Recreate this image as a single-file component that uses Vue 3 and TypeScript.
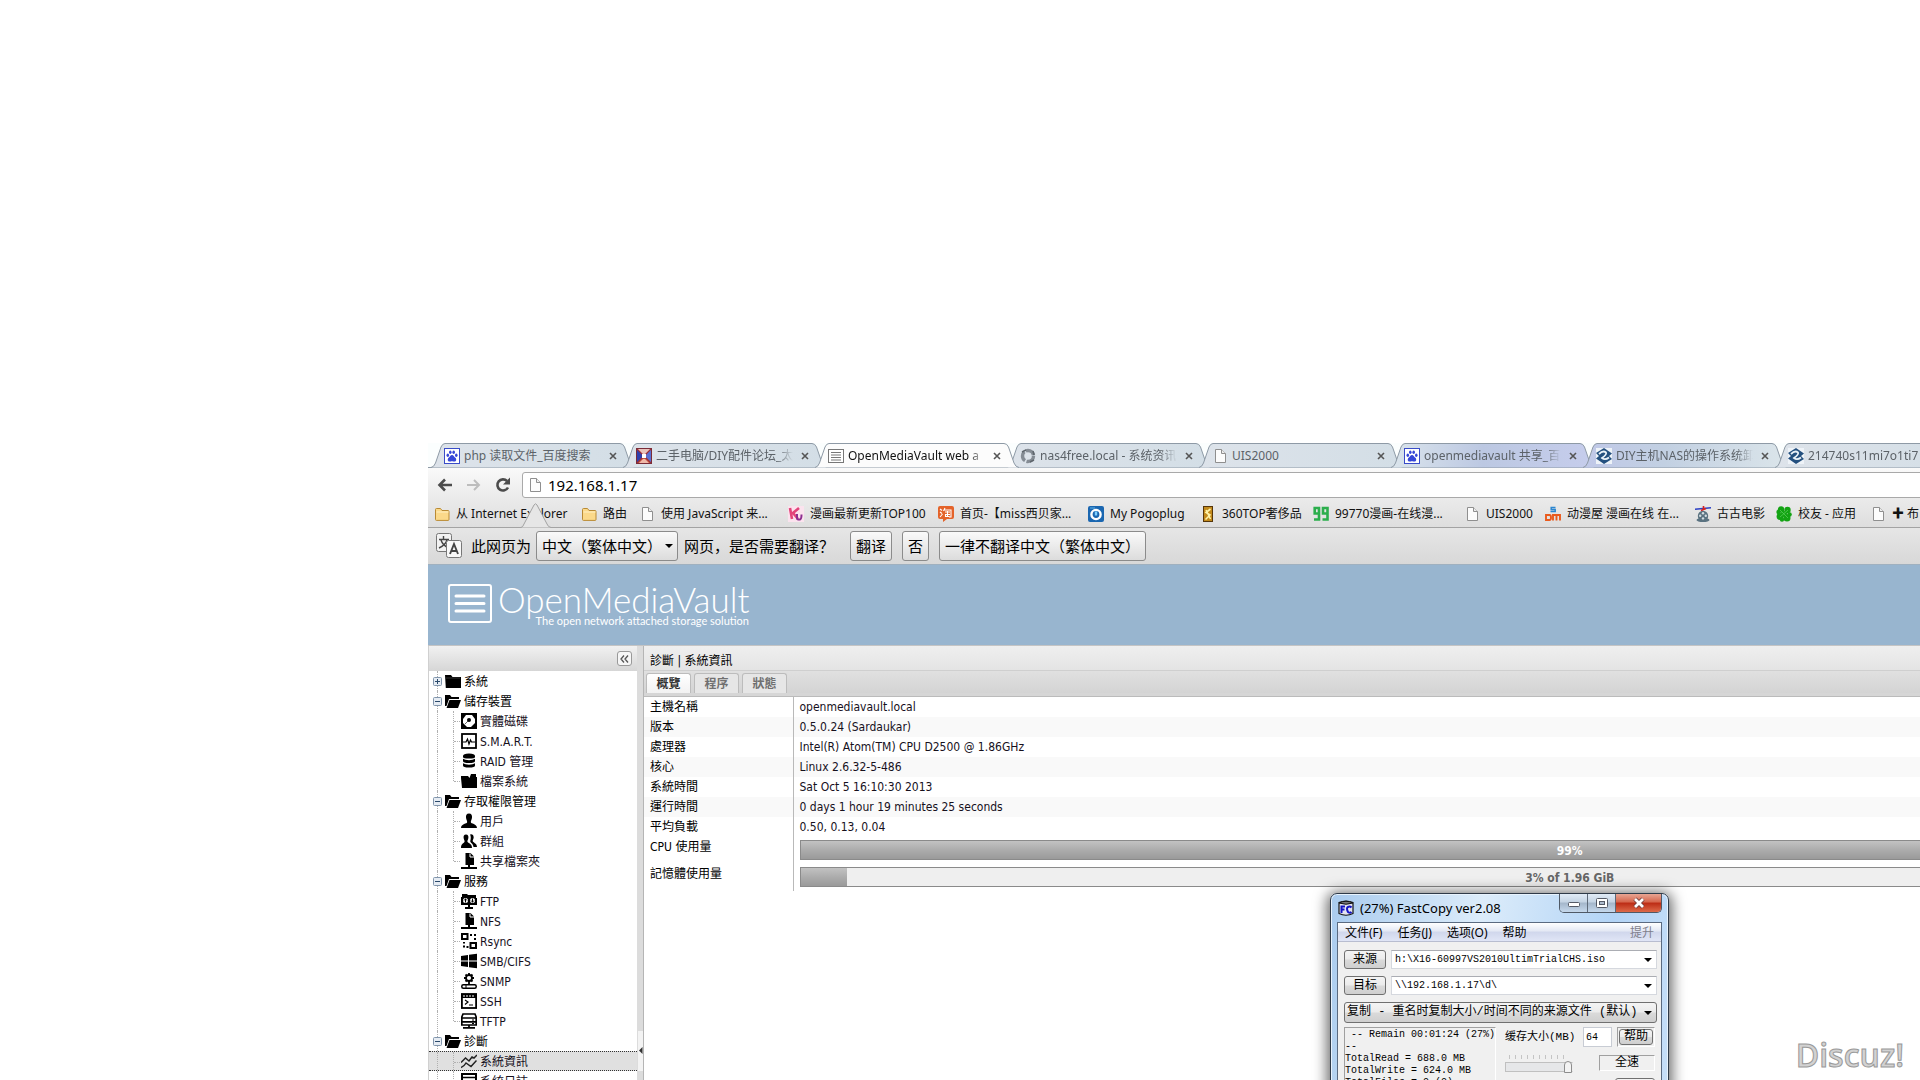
<script setup lang="ts">
import { ref } from 'vue'

interface Tab { title: string; icon: string; active?: boolean; tint?: string }
interface Bookmark { title: string; icon: string; width: number }
interface TreeNode { label: string; icon: string; root?: boolean; open?: boolean; last?: boolean; selected?: boolean }
interface InfoRow { label: string; value?: string; percent?: number; text?: string }

const paw = '<rect x="0.5" y="0.5" width="15" height="15" fill="#fff" stroke="#3a4cc8"/><g fill="#3647d8"><ellipse cx="3.8" cy="7.2" rx="1.3" ry="1.8"/><ellipse cx="6.3" cy="4.3" rx="1.3" ry="1.8"/><ellipse cx="9.7" cy="4.3" rx="1.3" ry="1.8"/><ellipse cx="12.3" cy="7.2" rx="1.3" ry="1.8"/><path d="M8 7c1.6 0 2 1.7 3.4 2.8 1.500 1.300.9 3.800-1 3.800-1 0-1.400-.4-2.400-.4s-1.400.4-2.400.4c-1.900 0-2.500-2.500-1-3.800C6 8.700 6.400 7 8 7z"/></g>'
const page = '<path d="M3.500 1.500h6l4 4v9h-10z" fill="#fcfcfc" stroke="#8f8f8f"/><path d="M9.500 1.500v4h4" fill="#eee" stroke="#8f8f8f"/>'
const folder = '<path d="M1.500 13.500v-10q0-1 1-1h4l1.500 2h6q1 0 1 1v8q0 .9-1 .9h-11.500q-1 0-1-.9z" fill="#fbd98a" stroke="#b98a34"/><path d="M2.500 6h12" stroke="#fff0c4"/>'
const zol = '<rect width="16" height="16" fill="#eef3f8"/><path d="M8 0l8 5.500-3 2.500 3 3L8 16 0 10.500 3 8 0 5z" fill="#24507f"/><path d="M3 6q4-4 7-1.500 1 2-4 5.500 3 2.500 7-.5" stroke="#e9f1f8" stroke-width="1.800" fill="none"/>'
const closedFolder = '<path d="M0 2h6l1.500 2H16v11H.8z" fill="#000"/><path d="M1 5h14" stroke="#555" stroke-width=".6"/>'
const nfs = '<path d="M4.500 0h5L13 3.500V12H4.500z" fill="#000"/><path d="M9 .5V4h4" stroke="#fff" fill="none"/><path d="M7 12h2v2H7zM0 14h16v2H0z" fill="#000"/>'

const icons: Record<string, string> = {
  paw, page, folder, zol, closedFolder, nfs,
  forum: '<rect width="16" height="16" fill="#3d50c0"/><path d="M1 1l5 5v4l-5 5z" fill="#2f3fae"/><path d="M15 1l-5 5v4l5 5z" fill="#5a70d4"/><path d="M1 1h14l-5 5H6z" fill="#e9c3bd"/><path d="M1 15h14l-5-5H6z" fill="#c2543f"/><path d="M3 15h10l-4-4H7z" fill="#f0b8a8"/><path d="M1 1l14 14M15 1L1 15" stroke="#a03038" stroke-width="1.200"/><rect x="6" y="6" width="4" height="4" fill="#fff"/><rect x=".5" y=".5" width="15" height="15" fill="none" stroke="#7a2c38"/>',
  omv: '<rect x=".5" y="1.500" width="15" height="13" fill="#fff" stroke="#777"/><path d="M3 4.500h10M3 7h10M3 9.500h10M3 12h10" stroke="#777"/>',
  nas: '<circle cx="8" cy="8" r="5.500" fill="none" stroke="#858c94" stroke-width="3.400" stroke-dasharray="10 1.500"/><path d="M2 4l4-2M14 12l-4 2M13 3l1 4" stroke="#5f666d" stroke-width="1.500"/>',
  ku: '<rect width="16" height="16" fill="#fbe3ee"/><path d="M2 2l2 11M11 2L5 7l5 6" stroke="#e2447a" stroke-width="2.600" fill="none"/><path d="M9 8v4q0 2 3 1.500 1.500-.5 1.500-5" stroke="#8d2f90" stroke-width="2" fill="none"/>',
  tao: '<path d="M2 0h12q2 0 2 2v9q0 2-2 2H9l-4 3v-3H2q-2 0-2-2V2q0-2 2-2z" fill="#e4632a"/><path d="M2 3l2 1.500M2 6l2 1.500M2 11l2.500-3M7 2L5.500 5M6.500 4H13v7h-2M7 6h5M7 8.500h5M9.500 5v5M7.500 8v2.500h4" stroke="#fff" fill="none" stroke-width="1.100"/>',
  pogo: '<rect width="16" height="16" rx="2" fill="#1a66b0"/><circle cx="8" cy="8.500" r="4.600" fill="none" stroke="#fff" stroke-width="2.400"/><path d="M8 5.500v4" stroke="#7fd0ff" stroke-width="2.400"/><path d="M2 2h5" stroke="#5fb4ec"/>',
  lux: '<rect x="3" y="0" width="10" height="16" fill="#c28a1c"/><rect x="3.500" y=".5" width="9" height="15" fill="none" stroke="#56360a"/><path d="M10.500 3L6 6.500l4 2.500-4.500 4.500M6 4l4.500 9" stroke="#fff3a8" stroke-width="1.600" fill="none"/>',
  nine: '<g fill="none" stroke="#2bae4c" stroke-width="2.600"><path d="M6 7.500H1.700V2H6v11.500H1M14.500 7.500H10V2h4.500v11.500H9.500"/></g>',
  sdm: '<path d="M10.500 1.500H6.200v2h4v2H5.500" stroke="#2b86d0" stroke-width="1.500" fill="none"/><path d="M1 9v5h3.500q1.500 0 1.500-2.500T4.500 9zM8 14.500V9h7v5.500M11.500 9v5.500" stroke="#ea5a1c" stroke-width="1.900" fill="none"/>',
  film: '<circle cx="8" cy="10" r="5.200" fill="#5a7280"/><ellipse cx="8" cy="14" rx="6.500" ry="2" fill="#5a7280"/><g fill="#d4dde2"><circle cx="8" cy="7.200" r="1.200"/><circle cx="5.200" cy="9.800" r="1.200"/><circle cx="10.800" cy="9.800" r="1.200"/><circle cx="8" cy="12.400" r="1.200"/></g><path d="M0 3.200l16-1.400" stroke="#2b3fc4" stroke-width="1.400"/><path d="M8.500 0v5M6 4.500l5-2" stroke="#d42222" stroke-width="1.600" fill="none"/>',
  clover: '<g fill="#13a313"><circle cx="5" cy="3.500" r="3.200"/><circle cx="11.500" cy="4" r="3.200"/><circle cx="4" cy="10.500" r="3.400"/><circle cx="11" cy="12" r="3.500"/><circle cx="8" cy="8" r="3"/><circle cx="13.500" cy="8.500" r="2.300"/><circle cx="6" cy="13.500" r="2.200"/><circle cx="2.500" cy="6" r="2.200"/></g><path d="M4 4l8 8M12 4l-8 7" stroke="#5fd45f" stroke-width=".7"/>',
  openFolder: '<path d="M0 2h5l1.500 2H14v2H4L1.500 13H0z" fill="#000"/><path d="M4.500 7H16l-3 8H1.500z" fill="#000"/>',
  disk: '<rect x="1" y="1" width="14" height="14" fill="#fff" stroke="#000" stroke-width="2"/><path d="M2 2h3L2 6zM14 2h-3l3 4zM2 14h4l-4-4zM14 14h-4l4-4z"/><circle cx="8" cy="7" r="2"/><path d="M4 11l3-3" stroke="#000" stroke-width=".6"/>',
  smart: '<rect x="1" y="1" width="14" height="14" fill="#fff" stroke="#000" stroke-width="1.800"/><path d="M2 9h3l1.500-3L8 11l1.500-4 1 2H14" stroke="#000" stroke-width="1.200" fill="none"/>',
  raid: '<g fill="#000"><path d="M2 3q0-2.500 6-2.500T14 3v1q0 1.500-6 1.500T2 4z"/><path d="M2 5.800q2 1.400 6 1.400t6-1.400V8q0 2-6 2T2 8z"/><path d="M2 10.300q2 1.400 6 1.400t6-1.400v2.200q0 2-6 2t-6-2z"/></g>',
  fs: '<path d="M0 3h7l1.500 2L10 1h5v3h1v11H1L0 5z" fill="#000"/>',
  user: '<path d="M8 .5c2.500 0 3.200 1.800 3 4-.1 2-1.200 3-1.200 4.500 0 2 6.200 1.500 6.200 6H0c0-4.500 6.200-4 6.200-6C6.200 7.500 5.100 6.500 5 4.500c-.2-2.200.5-4 3-4z"/>',
  group: '<path d="M5 1.500c2 0 2.600 1.500 2.400 3.300-.1 1.600-1 2.400-1 3.700 0 1.700 4.600 1.500 4.600 6.500H0c0-5 3.600-4.800 3.600-6.500 0-1.300-.9-2.100-1-3.700C2.400 3 3 1.500 5 1.500z"/><path d="M9 1.500q3.500-1 3.700 2.500c0 2-1 2.700-1 4 0 1.700 4.300 2 4.300 6h-3.500c-.3-3.500-3-4-3.200-5.500 0-1.300 1.300-4-.3-7z"/>',
  ftp: '<path d="M1 1h5l1 1h8v3h1v7H9v2h3v2H4v-2h3v-2H0V4h1z"/><circle cx="4.500" cy="7.500" r="2.500" fill="#fff"/><circle cx="11.500" cy="7.500" r="2.500" fill="#fff"/><path d="M4.500 5.500v4M11.500 5.500v4M3 7.500l1.500-1.500L6 7.500M10 7.500L11.500 9 13 7.500" stroke="#000" fill="none"/>',
  rsync: '<g fill="none" stroke="#000" stroke-width="2"><rect x="1" y="1" width="5.500" height="5"/><rect x="9.500" y="10" width="5.500" height="5"/></g><path d="M9 1h2v2H9zM13 1h2v2h-2zM13 5h2v2h-2zM2 9h2v1.500H2zM2 12.500h2v2H2zM5.500 13h2v2h-2z"/>',
  win: '<path d="M0 3l7-1v5.500H0zM8 1.800L16 .7v6.800H8zM0 8.500h7V14l-7-1zM8 8.500h8v6.800l-8-1.100z"/>',
  snmp: '<circle cx="8" cy="5" r="3" fill="none" stroke="#000" stroke-width="1.800"/><path d="M8 0v2M8 8v3M3 5h2M11 5h2M4.500 1.500l1.500 1.500M11.500 1.500L10 3M4.500 8.500L6 7M11.500 8.500L10 7" stroke="#000" stroke-width="1.800"/><rect x=".8" y="11.800" width="14.400" height="3.400" rx="1.500" fill="#fff" stroke="#000" stroke-width="1.500"/><path d="M5 11v5" stroke="#000"/>',
  ssh: '<rect x=".9" y="1" width="14.200" height="14" fill="#fff" stroke="#000" stroke-width="1.800"/><path d="M1 1h14v4H1z"/><path d="M3 2v2M6 2v2M9 2v2M12 2v2" stroke="#fff"/><path d="M4 7l3 2-3 2.500M8 12h4" stroke="#000" stroke-width="1.200" fill="none"/>',
  tftp: '<path d="M2 1h12l1.200 3v8H.8V4z" fill="#fff" stroke="#000" stroke-width="1.700"/><path d="M1 5h14M1 8.800h14M8 12v3M2 14.800h12" stroke="#000" stroke-width="1.700"/><path d="M11 7h2M11 10.500h2" stroke="#000"/>',
  chart: '<path d="M0 9.500L4.500 5l3.500 3L11 4l2 1 3-3M0 14.500q3-1 5-4.500l5 3.500 5.500-6" stroke="#222" stroke-width="1.500" fill="none"/>',
  log: '<rect x="1" y="1" width="14" height="14" fill="#fff" stroke="#000" stroke-width="2"/><path d="M1 4.500h14M1 8h14M1 11.500h14" stroke="#000" stroke-width="1.600"/>',
}

const tabs: Tab[] = [
  { title: 'php 读取文件_百度搜索', icon: 'paw' },
  { title: '二手电脑/DIY配件论坛_太', icon: 'forum' },
  { title: 'OpenMediaVault web a', icon: 'omv', active: true },
  { title: 'nas4free.local - 系统资讯', icon: 'nas' },
  { title: 'UIS2000', icon: 'page' },
  { title: 'openmediavault 共享_百', icon: 'paw', tint: 'url(#tintB)' },
  { title: 'DIY主机NAS的操作系统卸', icon: 'zol', tint: 'url(#tintC)' },
  { title: '214740s11mi7o1ti7', icon: 'zol' },
]

const bookmarks: Bookmark[] = [
  { title: '从 Internet Explorer', icon: 'folder', width: 147 },
  { title: '路由', icon: 'folder', width: 58 },
  { title: '使用 JavaScript 来...', icon: 'page', width: 149 },
  { title: '漫画最新更新TOP100', icon: 'ku', width: 150 },
  { title: '首页-【miss西贝家...', icon: 'tao', width: 150 },
  { title: 'My Pogoplug', icon: 'pogo', width: 112 },
  { title: '360TOP奢侈品', icon: 'lux', width: 113 },
  { title: '99770漫画-在线漫...', icon: 'nine', width: 151 },
  { title: 'UIS2000', icon: 'page', width: 81 },
  { title: '动漫屋 漫画在线 在...', icon: 'sdm', width: 150 },
  { title: '古古电影', icon: 'film', width: 81 },
  { title: '校友 - 应用', icon: 'clover', width: 94 },
  { title: '✚ 布', icon: 'page', width: 94 },
]

const tree: TreeNode[] = [
  { label: '系統', icon: 'closedFolder', root: true },
  { label: '儲存裝置', icon: 'openFolder', root: true, open: true },
  { label: '實體磁碟', icon: 'disk' },
  { label: 'S.M.A.R.T.', icon: 'smart' },
  { label: 'RAID 管理', icon: 'raid' },
  { label: '檔案系統', icon: 'fs', last: true },
  { label: '存取權限管理', icon: 'openFolder', root: true, open: true },
  { label: '用戶', icon: 'user' },
  { label: '群組', icon: 'group' },
  { label: '共享檔案夾', icon: 'nfs', last: true },
  { label: '服務', icon: 'openFolder', root: true, open: true },
  { label: 'FTP', icon: 'ftp' },
  { label: 'NFS', icon: 'nfs' },
  { label: 'Rsync', icon: 'rsync' },
  { label: 'SMB/CIFS', icon: 'win' },
  { label: 'SNMP', icon: 'snmp' },
  { label: 'SSH', icon: 'ssh' },
  { label: 'TFTP', icon: 'tftp', last: true },
  { label: '診斷', icon: 'openFolder', root: true, open: true },
  { label: '系統資訊', icon: 'chart', selected: true },
  { label: '系統日誌', icon: 'log' },
]

const info: InfoRow[] = [
  { label: '主機名稱', value: 'openmediavault.local' },
  { label: '版本', value: '0.5.0.24 (Sardaukar)' },
  { label: '處理器', value: 'Intel(R) Atom(TM) CPU D2500 @ 1.86GHz' },
  { label: '核心', value: 'Linux 2.6.32-5-486' },
  { label: '系統時間', value: 'Sat Oct 5 16:10:30 2013' },
  { label: '運行時間', value: '0 days 1 hour 19 minutes 25 seconds' },
  { label: '平均負載', value: '0.50, 0.13, 0.04' },
  { label: 'CPU 使用量', percent: 99, text: '99%' },
  { label: '記憶體使用量', percent: 3, text: '3% of 1.96 GiB' },
]

const panels = ['概覽', '程序', '狀態']
const activePanel = ref(0)
const address = ref('192.168.1.17')
const bufferSize = ref('64')
const speed = ref(10)
</script>

<template>
  <div class="desktop">
    <div class="browser">
      <svg class="defs" width="0" height="0" aria-hidden="true">
        <defs>
          <linearGradient id="tintA"><stop offset="0" stop-color="#dde3ea" /><stop offset="1" stop-color="#d3dee6" /></linearGradient>
          <linearGradient id="tintB"><stop offset="0" stop-color="#dbe5ec" /><stop offset=".45" stop-color="#bcc8e2" /><stop offset="1" stop-color="#c6cdec" /></linearGradient>
          <linearGradient id="tintC"><stop offset="0" stop-color="#c0c8e8" /><stop offset=".4" stop-color="#c2d0e2" /><stop offset="1" stop-color="#dbe5ea" /></linearGradient>
        </defs>
      </svg>
      <ul class="tabs">
        <li v-for="(t, i) in tabs" :key="i" class="tab" :class="{ active: t.active }">
          <svg class="tab-shape" viewBox="0 0 204 25" aria-hidden="true">
            <path d="M0 24.500Q3 24 4.500 20L10 4Q11.500.5 14 .5H189Q192 .5 193.500 4L199 20Q200.500 24 204 24.500" :fill="t.active ? '#fcfcfc' : t.tint || 'url(#tintA)'" stroke="#8e9aa6" />
          </svg>
          <svg class="ico" viewBox="0 0 16 16" aria-hidden="true" v-html="icons[t.icon]" />
          <span class="tab-title">{{ t.title }}</span>
          <button class="tab-close" type="button" aria-label="关闭">
            <svg viewBox="0 0 8 8" width="8" height="8" aria-hidden="true"><path d="M1 1l6 6M7 1L1 7" stroke="#555" stroke-width="1.600" /></svg>
          </button>
        </li>
      </ul>

      <div class="toolbar">
        <button type="button" class="nav" aria-label="后退"><svg viewBox="0 0 16 16" width="16" height="16"><path d="M15 8H3M8 2.500L2.500 8 8 13.500" stroke="#4c4c4c" stroke-width="2.600" fill="none" /></svg></button>
        <button type="button" class="nav" aria-label="前进"><svg viewBox="0 0 16 16" width="16" height="16"><path d="M1 8h12M8 3l5 5-5 5" stroke="#bdbdbd" stroke-width="2" fill="none" /></svg></button>
        <button type="button" class="nav" aria-label="重新加载"><svg viewBox="0 0 16 16" width="16" height="16"><path d="M13 10.500A5.600 5.600 0 1 1 12 4" stroke="#4c4c4c" stroke-width="2.600" fill="none" /><path d="M15 .5v7H8z" fill="#4c4c4c" /></svg></button>
        <label class="omnibox">
          <svg class="ico" viewBox="0 0 16 16" aria-hidden="true" v-html="icons.page" />
          <input v-model="address" type="text" aria-label="地址栏" />
        </label>
      </div>

      <nav class="bookmarks">
        <a v-for="(b, i) in bookmarks" :key="i" href="#" class="bookmark" :style="{ width: b.width + 'px' }">
          <svg class="ico" viewBox="0 0 16 16" aria-hidden="true" v-html="icons[b.icon]" />
          <span>{{ b.title }}</span>
        </a>
        <svg class="callout" viewBox="0 0 30 25" aria-hidden="true"><path d="M0 24.500Q2 24 3 21L13 2Q14.500-.5 16 2L26 21Q27 24 30 24.500" fill="#e6e6e6" stroke="#a3a3a3" /></svg>
      </nav>

      <div class="translate">
        <svg class="translate-ico" viewBox="0 0 28 26" aria-hidden="true">
          <rect x="1.500" y=".5" width="15" height="18" rx="2" fill="#f2f2f2" stroke="#777" />
          <path d="M8.500 3v3M4 6.500h10M6 7q1.500 5 7.500 8M12 7q-1.500 5-8 8" stroke="#444" stroke-width="1.400" fill="none" />
          <rect x="11.500" y="7.500" width="15" height="17" rx="2" fill="#f8f8f8" stroke="#777" />
          <path d="M15 21l4-10 4 10M16.500 18h5" stroke="#444" stroke-width="1.900" fill="none" />
        </svg>
        <span>此网页为</span>
        <span class="lang-wrap"><select class="chrome-btn lang" aria-label="网页语言"><option>中文（繁体中文）</option></select></span>
        <span class="question">网页，是否需要翻译？</span>
        <button type="button" class="chrome-btn">翻译</button>
        <button type="button" class="chrome-btn">否</button>
        <button type="button" class="chrome-btn">一律不翻译中文（繁体中文）</button>
      </div>

      <header class="banner">
        <svg class="logo" viewBox="0 0 44 39" aria-hidden="true">
          <rect x="1" y="1" width="42" height="37" rx="2" fill="none" stroke="#fff" stroke-width="2" />
          <path d="M8 12h28M8 19.500h28M8 27h28" stroke="#fff" stroke-width="3" stroke-linecap="round" />
        </svg>
        <div class="brand">
          <div class="brand-name">OpenMediaVault</div>
          <div class="brand-tag">The open network attached storage solution</div>
        </div>
      </header>

      <div class="workspace">
        <aside class="sidebar">
          <div class="side-head">
            <button type="button" class="collapse" aria-label="收合"><svg viewBox="0 0 9 8" width="9" height="8"><path d="M4 .5L1 4l3 3.500M8 .5L5 4l3 3.500" stroke="#555" stroke-width="1.300" fill="none" /></svg></button>
          </div>
          <ul class="tree">
            <li v-for="(n, i) in tree" :key="i" class="node" :class="{ child: !n.root, last: n.last, selected: n.selected }">
              <span v-if="n.root" class="expander"><svg viewBox="0 0 9 9" width="9" height="9" aria-hidden="true"><rect x=".5" y=".5" width="8" height="8" rx="1" fill="#e6ecf3" stroke="#8296ad" /><path :d="n.open ? 'M2 4.500h5' : 'M2 4.500h5M4.500 2v5'" stroke="#2b4a6b" /></svg></span>
              <span v-else class="guide" />
              <svg class="ico" viewBox="0 0 16 16" aria-hidden="true" v-html="icons[n.icon]" />
              <span class="node-label">{{ n.label }}</span>
            </li>
          </ul>
        </aside>
        <div class="splitter"><svg class="grip" viewBox="0 0 6 40" aria-hidden="true"><path d="M0 0h5v40H0z" fill="#f3f3f3" /><path d="M4.500 16v7L1 19.500z" fill="#333" /></svg></div>
        <main class="content">
          <h1 class="title">診斷 | 系統資訊</h1>
          <div class="panel-tabs" role="tablist">
            <button v-for="(p, i) in panels" :key="p" type="button" role="tab" class="panel-tab" :class="{ on: i === activePanel }" @click="activePanel = i">{{ p }}</button>
          </div>
          <table class="info">
            <tbody>
              <tr v-for="r in info" :key="r.label" :class="{ tall: r.text }">
                <th scope="row">{{ r.label }}</th>
                <td>
                  <div v-if="r.text" class="meter" role="progressbar" :aria-valuenow="r.percent">
                    <div class="fill" :style="{ width: r.percent + '%' }" />
                    <span class="meter-text" :class="{ light: r.percent === 99 }">{{ r.text }}</span>
                  </div>
                  <template v-else>{{ r.value }}</template>
                </td>
              </tr>
            </tbody>
          </table>
        </main>
      </div>
    </div>

    <section class="fastcopy">
      <div class="fc-title">
        <svg class="fc-ico" viewBox="0 0 16 16" aria-hidden="true"><path d="M1 2.500Q8-.5 15 2.500v11Q8 17 1 13.500z" fill="#e4e4f0" stroke="#111" stroke-width="1.200" /><path d="M1 3Q8-.5 15 3 8 5.500 1 3z" fill="#777" stroke="#111" /><path d="M7 6.500H3.500v6.500M3.500 9.500h3M13.500 7.500Q12 6 10 7t0 5q2 1.500 3.500 0" stroke="#1414c4" stroke-width="2" fill="none" /></svg>
        <span>(27%) FastCopy ver2.08</span>
        <div class="win-btns">
          <button type="button" aria-label="最小化"><svg viewBox="0 0 14 12" width="14" height="12"><rect x="1.500" y="5.500" width="11" height="4" rx="1" fill="#fff" stroke="#555a66" /></svg></button>
          <button type="button" aria-label="最大化"><svg viewBox="0 0 14 12" width="14" height="12"><rect x="1.500" y="1.500" width="11" height="9" rx="1" fill="#fff" stroke="#555a66" /><rect x="4.500" y="4.500" width="5" height="3" fill="#aebccd" stroke="#555a66" /></svg></button>
          <button type="button" class="close" aria-label="关闭"><svg viewBox="0 0 14 12" width="14" height="12"><path d="M3 2l8 8M11 2l-8 8" stroke="#6b3a3a" stroke-width="4.400" /><path d="M3 2l8 8M11 2l-8 8" stroke="#fff" stroke-width="2.800" /></svg></button>
        </div>
      </div>
      <div class="fc-client">
        <div class="fc-menu">
          <button type="button">文件(F)</button><button type="button">任务(J)</button><button type="button">选项(O)</button><button type="button">帮助</button>
          <button type="button" class="elevate">提升</button>
        </div>
        <div class="fc-body">
          <div class="fc-row">
            <button type="button" class="win-btn">来源</button>
            <span class="combo"><select aria-label="来源"><option>h:\X16-60997VS2010UltimTrialCHS.iso</option></select></span>
          </div>
          <div class="fc-row">
            <button type="button" class="win-btn">目标</button>
            <span class="combo"><select aria-label="目标"><option>\\192.168.1.17\d\</option></select></span>
          </div>
          <span class="combo mode"><select aria-label="模式"><option>复制 - 重名时复制大小/时间不同的来源文件 (默认)</option></select></span>
          <div class="fc-lower">
            <pre class="log"> -- Remain 00:01:24 (27%)
--
TotalRead = 688.0 MB
TotalWrite = 624.0 MB
TotalFiles = 0 (0)</pre>
            <div class="fc-side">
              <div class="side-row">
                <label for="buffer">缓存大小(MB)</label>
                <input id="buffer" v-model="bufferSize" type="text" class="buffer" />
                <span class="frame"><button type="button" class="win-btn help">帮助</button></span>
              </div>
              <div class="side-row speed-row">
                <div class="slider"><div class="ticks" /><input v-model="speed" type="range" min="0" max="10" aria-label="速度" /></div>
                <output class="speed">全速</output>
              </div>
              <div class="side-row last-row">
                <label class="check"><input type="checkbox" />估计时间</label>
                <button type="button" class="win-btn run">显示</button>
              </div>
            </div>
          </div>
        </div>
      </div>
    </section>

    <div class="watermark">Discuz!</div>
  </div>
</template>

<style>
body { margin: 0; background: #fff; }
</style>

<style scoped>
.desktop {
  position: relative;
  box-sizing: border-box;
  height: 100vh;
  padding: 443px 0 0 428px;
  overflow: hidden;
  background: #fff;
  font: 12px/16px "Noto Sans", "Noto Sans CJK SC", sans-serif;
  color: #000;
}
.desktop * { box-sizing: border-box; }
button, input, select { font: inherit; color: inherit; margin: 0; }
ul { list-style: none; margin: 0; padding: 0; }
.browser { width: 100vw; height: 100%; display: flex; flex-direction: column; }
.browser > * { flex: none; }
.defs { position: absolute; }
.ico { width: 16px; height: 16px; flex: none; }

/* tab strip */
.tabs { display: flex; height: 25px; padding-left: 3px; border-bottom: 1px solid #8e9aa6; background: #fbfefe; }
.tab { position: relative; flex: 0 0 192px; min-width: 0; height: 25px; display: flex; align-items: center; padding: 0 2px 0 13px; color: #5c6268; }
.tab > * { position: relative; }
.tab .tab-shape { position: absolute; left: 0; top: 0; width: 204px; height: 25px; }
.tab.active { z-index: 2; color: #111; }
.tab-title { flex: 1; min-width: 0; margin: 0 4px; overflow: hidden; white-space: nowrap; mask-image: linear-gradient(90deg, #000 88%, transparent); }
.tab:first-child .tab-title, .tab:nth-child(5) .tab-title { mask-image: none; }
.tab-close { flex: none; width: 16px; height: 16px; padding: 0; border: 0; background: none; display: grid; place-items: center; }

/* toolbar */
.toolbar { display: flex; align-items: center; height: 34px; padding: 0 0 0 5px; gap: 5px; background: linear-gradient(#fafafa, #e9e9e9); }
.nav { width: 24px; height: 24px; padding: 0; border: 0; background: none; display: grid; place-items: center; }
.omnibox { flex: 1; display: flex; align-items: center; height: 26px; margin-left: 2px; padding-left: 4px; border: 1px solid #a9a9a9; border-radius: 3px 0 0 3px; background: #fff; }
.omnibox input { flex: 1; border: 0; outline: 0; padding: 0 0 0 5px; font-size: 15px; line-height: 20px; background: none; }

/* bookmarks */
.bookmarks { position: relative; display: flex; align-items: center; height: 26px; padding: 0 0 2px 6px; border-bottom: 1px solid #a3a3a3; background: linear-gradient(#e9e9e9, #dedede); }
.bookmark { flex: none; display: flex; align-items: center; gap: 6px; color: #111; text-decoration: none; white-space: nowrap; }
.callout { position: absolute; left: 93px; top: 1px; width: 30px; height: 25px; }

/* translate bar */
.translate { display: flex; align-items: center; height: 37px; padding-left: 7px; border-bottom: 1px solid #9fb0bf; font-size: 15px; line-height: 20px; background: linear-gradient(#e6e6e6, #d8d8d8); }
.translate-ico { width: 28px; height: 26px; margin-right: 8px; }
.chrome-btn { height: 30px; padding: 0 5px; border: 1px solid #8b8b8b; border-radius: 3px; background: linear-gradient(#fafafa, #dcdcdc); white-space: nowrap; }
.translate button { margin-right: 10px; }
.lang-wrap { position: relative; margin: 0 6px 0 5px; }
.lang { appearance: none; width: 142px; }
.lang-wrap::after, .combo::after { content: ""; position: absolute; right: 5px; top: 50%; margin-top: -2px; border: 4px solid transparent; border-top-color: #000; border-bottom: 0; pointer-events: none; }
.question { margin-right: 16px; }

/* banner */
.banner { display: flex; align-items: center; height: 80px; padding: 0 0 4px 20px; background: #98b5cf; color: #fff; }
.logo { width: 44px; height: 39px; margin-right: 6px; }
.brand { width: 251px; padding-top: 4px; }
.brand-name { font: 300 35px/32px Lato, "Open Sans", sans-serif; }
.brand-tag { font: 400 11px/12px Lato, "Open Sans", sans-serif; text-align: right; white-space: nowrap; }

/* workspace */
.workspace { display: flex; flex: 1 0 0; min-height: 0; font: 11px/20px "DejaVu Sans Condensed", "Noto Sans CJK TC", sans-serif; border-top: 1px solid #c4c4c4; }
.sidebar { width: 209px; flex: none; border-left: 1px solid #d0d0d0; background: #fff; }
.side-head { display: flex; justify-content: flex-end; align-items: center; height: 25px; padding-right: 5px; background: linear-gradient(#f1f1f1, #d6d6d6); }
.collapse { width: 15px; height: 15px; padding: 0; display: grid; place-items: center; border: 1px solid #999; border-radius: 3px; background: #f6f6f6; }
.tree { font-size: 12px; }
.node { position: relative; display: flex; align-items: center; height: 20px; padding-left: 4px; }
.node::before { content: ""; position: absolute; left: 8px; top: 0; bottom: 0; border-left: 1px dotted #b0b0b0; }
.expander { position: relative; width: 12px; height: 9px; display: flex; }
.guide { width: 28px; height: 20px; }
.guide::before { content: ""; position: absolute; left: 24px; top: 0; height: 20px; border-left: 1px dotted #b0b0b0; }
.guide::after { content: ""; position: absolute; left: 25px; top: 10px; width: 6px; border-top: 1px dotted #b0b0b0; }
.last .guide::before { height: 10px; }
.node-label { margin-left: 3px; padding-top: 1px; white-space: nowrap; }
.child .node-label { color: #16101c; }
.selected { background: #e0e0e0; border-top: 1px dotted #333; border-bottom: 1px dotted #333; }
.splitter { position: relative; width: 6px; flex: none; background: #dcdcdc; }
.grip { position: absolute; left: 1px; top: 385px; width: 6px; height: 40px; }
.content { flex: 1; min-width: 0; border-left: 1px solid #b5b5b5; background: #fff; }
.title { margin: 0; padding: 3px 0 0 6px; height: 25px; font-size: 12px; font-weight: 400; line-height: 24px; background: linear-gradient(#efefef, #e4e4e4); border-bottom: 1px solid #cfcfcf; }
.panel-tabs { display: flex; gap: 3px; height: 26px; padding: 2px 0 0 2px; align-items: flex-start; background: linear-gradient(#d6d6d6 0 0) 0 22px / 100% 4px no-repeat, linear-gradient(#e0e0e0, #d2d2d2); border-bottom: 1px solid #bbb; }
.panel-tab { width: 45px; height: 20px; padding: 0; border: 1px solid #bcbcbc; border-bottom: 0; border-radius: 3px 3px 0 0; background: #e6e6e6; color: #707070; font-size: 12px; font-weight: 700; line-height: 18px; }
.panel-tab.on { background: linear-gradient(#fff, #f2f2f2); color: #333; }
.info { width: 100%; border-collapse: collapse; table-layout: fixed; }
.info tr { height: 20px; }
.info tr:nth-child(even) { background: #f9f9f9; }
.info tr.tall { height: 27px; background: none; }
.info th { width: 149px; padding: 0 0 0 6px; border-right: 1px solid #b9b9b9; text-align: left; font-weight: 400; font-size: 12px; vertical-align: top; }
.info td { padding: 0 8px 0 6px; vertical-align: top; color: #16101c; font-size: 12px; }
.meter { position: relative; height: 20px; margin-top: 3px; border: 1px solid #8a8a8a; background: #efefef; }
.fill { height: 18px; background: linear-gradient(#c2c2c2, #acacac 50%, #9a9a9a); }
.meter-text { position: absolute; inset: 0; text-align: center; line-height: 20px; font-weight: 700; color: #666; }
.meter-text.light { color: #fff; }

/* FastCopy window */
.fastcopy {
  position: absolute; left: 1330px; top: 893px; width: 339px; height: 260px;
  padding: 1px 6px; border: 1px solid #2f3a48; border-radius: 7px 7px 0 0;
  background: linear-gradient(100deg, #a9cbee, #dcecfa 40%, #b3d4f6 75%, #c9e0f8);
  box-shadow: inset 0 0 0 1px #e8f3fd, 0 2px 14px 3px rgba(0, 0, 0, .6);
}
.fc-title { display: flex; align-items: center; height: 27px; padding-bottom: 2px; font-size: 13px; line-height: 20px; }
.fc-ico { width: 16px; height: 16px; margin: 0 6px 0 1px; }
.win-btns { display: flex; align-self: flex-start; margin-left: auto; margin-top: -1px; border: 1px solid #4f5966; border-top: 0; border-radius: 0 0 5px 5px; overflow: hidden; }
.win-btns button { width: 28px; height: 18px; padding: 0; border: 0; border-right: 1px solid #5d6978; display: grid; place-items: center; background: linear-gradient(#e1ebf6, #c4d3e3 45%, #a4b6ca 50%, #c5d8ec); }
.win-btns .close { width: 45px; border-right: 0; background: linear-gradient(#e8a593, #d5654c 45%, #bc2c15 50%, #dd6a4a); }
.fc-client { height: 230px; border: 1px solid #5a6a80; background: #f0f0f0; }
.fc-menu { display: flex; align-items: center; height: 19px; padding: 1px 7px 0; gap: 15px; background: linear-gradient(#fff, #e3e8f4 45%, #d0d7ec 50%, #e0e5f6); border-bottom: 1px solid #b8bdd0; }
.fc-menu button { padding: 0; border: 0; background: none; white-space: nowrap; }
.fc-menu .elevate { margin-left: auto; color: #7f7f8c; }
.fc-body { display: flex; flex-direction: column; gap: 7px; padding: 8px 4px 0 6px; font: 10px/12px "Liberation Mono", "Noto Sans CJK SC", monospace; }
.fc-row { display: flex; gap: 5px; }
.win-btn { width: 42px; height: 19px; padding: 0; border: 1px solid #707070; border-radius: 3px; background: linear-gradient(#f4f4f4, #ebebeb 48%, #dadada 52%, #cfcfcf); font-size: 12px; line-height: 16px; }
.combo { position: relative; display: flex; flex: 1; }
.combo select { appearance: none; width: 100%; height: 19px; padding: 0 3px; border: 1px solid #d5d8de; border-top-color: #abadb3; background: #fff; border-radius: 0; }
.combo.mode { flex: none; }
.mode select { height: 21px; padding: 0 2px; border: 1px solid #707070; border-radius: 3px; background: linear-gradient(#f4f4f4, #ebebeb 48%, #dadada 52%, #cfcfcf); font-size: 12px; line-height: 19px; }
.fc-lower { display: flex; gap: 9px; }
.log { flex: none; width: 152px; height: 100px; margin: -3px 0 0; padding: 1px 0; border: 1px solid #a0a0a0; border-right-color: #fff; font: 10px/12px "Liberation Mono", monospace; overflow: hidden; }
.fc-side { flex: 1; display: flex; flex-direction: column; gap: 6px; min-width: 0; margin-top: -3px; padding-right: 2px; }
.side-row { display: flex; align-items: center; height: 20px; }
.side-row label { white-space: nowrap; }
.side-row label[for] { width: 78px; font-size: 11px; }
.buffer { width: 29px; height: 20px; padding: 0 2px; border: 1px solid #c8ccd4; background: #fff; }
.frame { display: flex; margin-left: auto; padding: 1px; border: 1px solid #a0a0a0; border-right-color: #fff; border-bottom-color: #fff; }
.help { width: 34px; height: 16px; line-height: 12px; }
.speed-row { justify-content: space-between; }
.slider { width: 68px; }
.ticks { height: 4px; margin: 0 4px; background: repeating-linear-gradient(90deg, #c4c4c4 0 1px, transparent 1px 6px); }
.slider input { appearance: none; display: block; width: 68px; height: 10px; margin-top: 3px; background: #e6e7e9; border: 1px solid #c0c0c0; border-right-color: #eee; }
.slider input::-webkit-slider-thumb { appearance: none; width: 8px; height: 12px; border: 1px solid #8d8d8d; border-radius: 4px 4px 0 0; background: #f3f3f3; }
.speed { width: 56px; height: 16px; border: 1px solid #a0a0a0; border-right-color: #fff; border-bottom-color: #fff; text-align: center; font-size: 12px; line-height: 14px; }
.last-row { justify-content: space-between; margin-top: -2px; font-size: 11px; color: #777; }
.check { display: flex; align-items: center; gap: 5px; }
.check input { width: 13px; height: 13px; }
.run { width: 40px; color: #000; }

.watermark { position: absolute; right: 16px; bottom: 5px; font: 600 32px/40px "Open Sans", sans-serif; color: #d2d2d2; -webkit-text-stroke: 1px #999; }
</style>
